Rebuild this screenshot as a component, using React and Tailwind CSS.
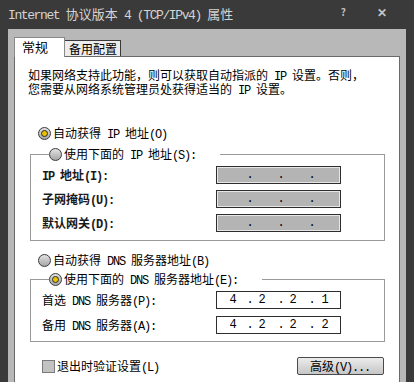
import React from "react";

const LAT = "font-['Liberation_Mono',monospace] tracking-[-1.2px] leading-[0px]";

function T({ s, latin = LAT }) {
  const parts = s.split(/([\x00-\x7F]+)/).filter((p) => p !== "");
  return (
    <span>
      {parts.map((p, i) =>
        /^[\x00-\x7F]+$/.test(p) ? (
          <span key={i} className={latin + " whitespace-pre"}>
            {p}
          </span>
        ) : (
          <span key={i}>{p}</span>
        )
      )}
    </span>
  );
}

function Radio({ checked }) {
  return (
    <span className="flex items-center justify-center w-[13px] h-[13px] shrink-0 rounded-full border border-[#3a3a3a] bg-linear-to-b from-[#e2e2e2] to-[#a6a6a6]">
      {checked && (
        <span className="w-[7px] h-[7px] rounded-full border border-[#2a2a2a] bg-[#e8c400]" />
      )}
    </span>
  );
}

const CELL = "flex justify-center w-[6px] font-['Liberation_Mono',monospace]";

function Octets({ vals }) {
  const v = vals || ["", "", "", ""];
  return (
    <div className="flex items-center h-full pl-[13px] text-[12px] leading-none text-black">
      <span className={CELL}>{v[0]}</span>
      <span className={CELL + " ml-[11px]"}>.</span>
      <span className={CELL + " ml-[6px]"}>{v[1]}</span>
      <span className={CELL + " ml-[13px]"}>.</span>
      <span className={CELL + " ml-[6px]"}>{v[2]}</span>
      <span className={CELL + " ml-[13px]"}>.</span>
      <span className={CELL + " ml-[7px]"}>{v[3]}</span>
    </div>
  );
}

function Field({ vals }) {
  return vals ? (
    <div className="w-[125px] h-[18px] bg-white border border-[#2e2e2e]">
      <Octets vals={vals} />
    </div>
  ) : (
    <div className="w-[125px] h-[18px] bg-[#b4b4b4] border border-[#2e2e2e] shadow-[inset_0_0_0_1px_#e6e6e6]">
      <Octets />
    </div>
  );
}

function Row({ label, vals, bold }) {
  return (
    <div className="flex items-center h-[18px]">
      <span className={"w-[174px] shrink-0 " + (bold ? "font-bold text-[#1a1a1a]" : "")}>
        <T s={label} />
      </span>
      <Field vals={vals} />
    </div>
  );
}

export default function App() {
  return (
    <div className="w-[414px] h-[382px] overflow-hidden bg-[#3a3a3a] flex flex-col font-['Noto_Sans_CJK_SC',sans-serif] text-[12px] leading-[14px] text-black">
      {/* title bar */}
      <div className="h-[29px] shrink-0 flex items-center pl-[8px] text-[13px] text-[#d4d4d4]">
        <span className="pb-[1px]">
          <T s="Internet 协议版本 4 (TCP/IPv4) 属性" latin="font-['Liberation_Mono',monospace] tracking-[-1.4px] leading-[0px]" />
        </span>
        <span className="ml-auto mb-[5px] text-[10px] font-bold text-[#bdbdbd]">?</span>
        <span className="ml-[31px] mr-[27px] mb-[5px] text-[12px] font-bold text-[#c4c4c4]">✕</span>
      </div>

      {/* window body */}
      <div className="flex-1 flex flex-col mx-[8px] bg-[#b8b8b8] pt-[8px] px-[6px]">
        {/* tabs */}
        <div className="flex items-end h-[20px] -mb-px relative z-10">
          <div className="w-[51px] h-[20px] bg-white border-l border-t border-r border-[#8a8a8a] pl-[7px] pt-[1px] text-[13px] leading-[16px] whitespace-nowrap">
            常规
          </div>
          <div className="w-[56px] h-[16px] mb-px bg-[#ececec] border-t border-r border-[#3a3a3a] pl-[4px] text-[12px] leading-[15px] whitespace-nowrap">
            备用配置
          </div>
        </div>

        {/* panel */}
        <div className="flex-1 flex flex-col bg-white border border-b-0 border-[#6a6a6a]">
          <p className="pt-[11px] pl-[13px] leading-[14px]">
            <T s="如果网络支持此功能，则可以获取自动指派的 IP 设置。否则，" />
            <br />
            <T s="您需要从网络系统管理员处获得适当的 IP 设置。" />
          </p>

          <div className="flex items-center h-[14px] mt-[30px] ml-[23px] gap-[2px]">
            <Radio checked />
            <T s="自动获得 IP 地址(O)" />
          </div>

          <fieldset className="mt-[7px] ml-[15px] mr-[14px] border border-[#9a9a9a] pl-[11px] pt-[5px] pb-[8px] flex flex-col gap-[6px]">
            <legend className="ml-[7px] pr-[24px] flex items-center h-[14px] gap-[2px]">
              <Radio />
              <T s="使用下面的 IP 地址(S):" />
            </legend>
            <Row label="IP 地址(I):" bold />
            <Row label="子网掩码(U):" bold />
            <Row label="默认网关(D):" bold />
          </fieldset>

          <div className="flex items-center h-[14px] mt-[12px] ml-[23px] gap-[2px]">
            <Radio />
            <T s="自动获得 DNS 服务器地址(B)" />
          </div>

          <fieldset className="mt-[5px] ml-[15px] mr-[14px] border border-[#9a9a9a] pl-[11px] pt-[5px] pb-[7px] flex flex-col gap-[7px]">
            <legend className="ml-[7px] pr-[24px] flex items-center h-[14px] gap-[2px]">
              <Radio checked />
              <T s="使用下面的 DNS 服务器地址(E):" />
            </legend>
            <Row label="首选 DNS 服务器(P):" vals={["4", "2", "2", "1"]} />
            <Row label="备用 DNS 服务器(A):" vals={["4", "2", "2", "2"]} />
          </fieldset>

          <div className="flex items-center h-[18px] mt-[15px] ml-[27px] mr-[15px]">
            <span className="w-[13px] h-[13px] border border-[#7a7a7a] bg-[#c2c2c2]" />
            <span className="ml-[2px]">
              <T s="退出时验证设置(L)" />
            </span>
            <button className="ml-auto w-[87px] h-[18px] border border-[#4a4a4a] rounded-[2px] bg-linear-to-b from-[#ececec] to-[#c6c6c6] text-left pl-[12px] leading-[16px]">
              <T s="高级(V)..." />
            </button>
          </div>
        </div>
      </div>
    </div>
  );
}
